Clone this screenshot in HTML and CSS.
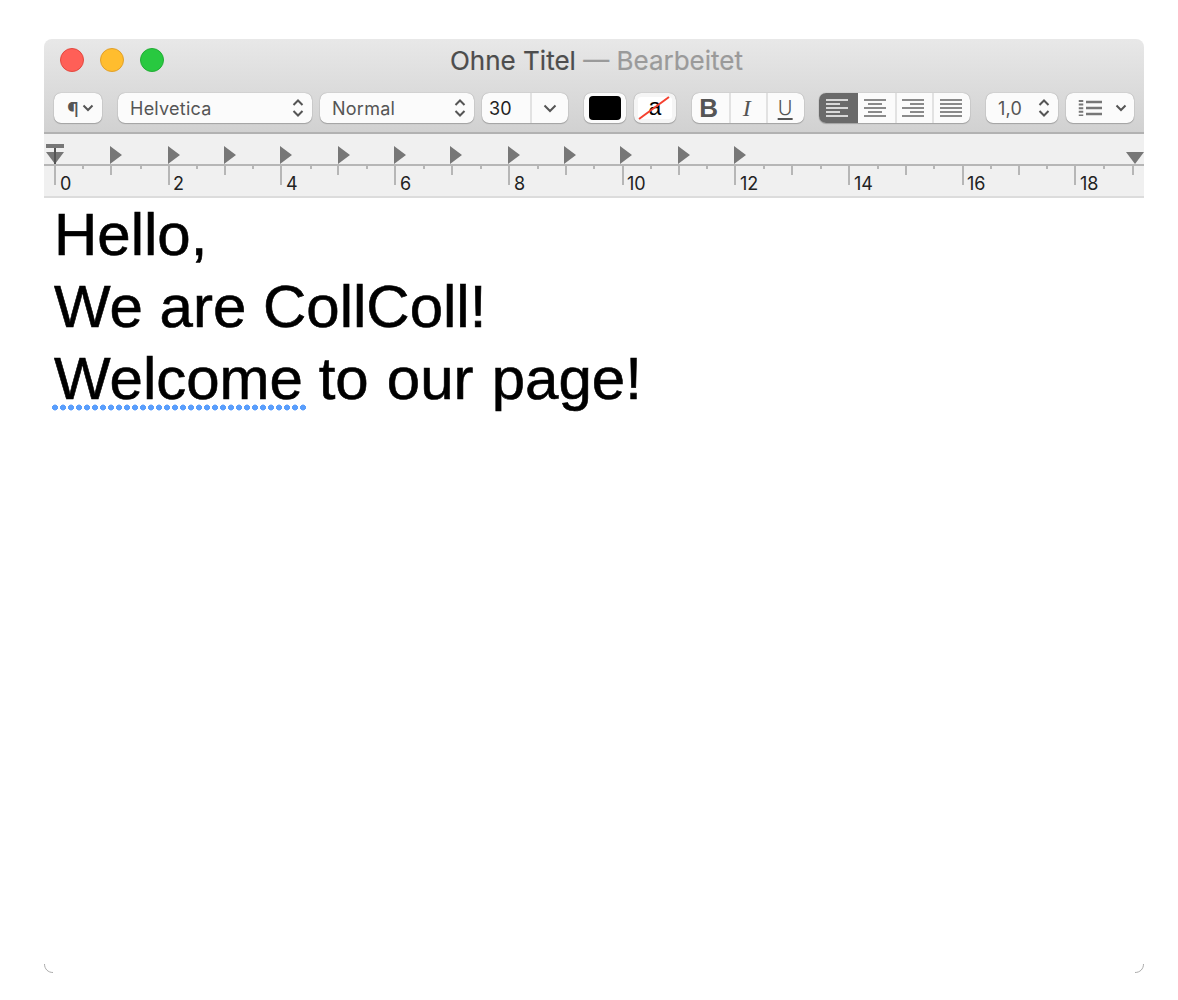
FILE: index.html
```html
<!DOCTYPE html>
<html lang="en">
<head>
  <meta charset="UTF-8">
  <title>Ohne Titel</title>
  <link rel="stylesheet" href="styles.css">
</head>
<body>
  <div class="window">
    <div class="titlebar">
      <div class="title-row">
        <div class="lights">
          <span class="light red"></span>
          <span class="light yellow"></span>
          <span class="light green"></span>
        </div>
        <div class="title">Ohne Titel <span class="edited">— Bearbeitet</span></div>
      </div>
      <div class="toolbar">
        <div class="ctl para"><span class="pilcrow">¶</span>
          <svg class="chev" width="12" height="8" viewBox="0 0 12 8"><path d="M1.5 1.5 6 6l4.5-4.5"/></svg>
        </div>
        <div class="ctl font"><span>Helvetica</span>
          <svg class="updown" width="12" height="20" viewBox="0 0 12 20"><path d="M1.5 7 6 2.5 10.5 7M1.5 13 6 17.5 10.5 13"/></svg>
        </div>
        <div class="ctl style"><span>Normal</span>
          <svg class="updown" width="12" height="20" viewBox="0 0 12 20"><path d="M1.5 7 6 2.5 10.5 7M1.5 13 6 17.5 10.5 13"/></svg>
        </div>
        <div class="ctl size">
          <span class="size-val">30</span>
          <span class="size-btn"><svg class="chev" width="14" height="9" viewBox="0 0 14 9"><path d="M1.5 1.5 7 7l5.5-5.5"/></svg></span>
        </div>
        <div class="ctl well first-well"><span class="swatch black"></span></div>
        <div class="ctl well">
          <span class="swatch nobg">
            <span class="a">a</span>
            <svg class="slash" width="32" height="24" viewBox="0 0 32 24"><path d="M1 23 31 1"/></svg>
          </span>
        </div>
        <div class="ctl seg biu">
          <span class="seg-item b">B</span>
          <span class="seg-item i">I</span>
          <span class="seg-item u">U</span>
        </div>
        <div class="ctl seg align">
          <span class="seg-item on">
            <svg width="24" height="20" viewBox="0 0 24 20"><path d="M1 2h22M1 6h14M1 10h22M1 14h14M1 18h22"/></svg>
          </span>
          <span class="seg-item">
            <svg width="24" height="20" viewBox="0 0 24 20"><path d="M1 2h22M5 6h14M1 10h22M5 14h14M1 18h22"/></svg>
          </span>
          <span class="seg-item">
            <svg width="24" height="20" viewBox="0 0 24 20"><path d="M1 2h22M9 6h14M1 10h22M9 14h14M1 18h22"/></svg>
          </span>
          <span class="seg-item">
            <svg width="24" height="20" viewBox="0 0 24 20"><path d="M1 2h22M1 6h22M1 10h22M1 14h22M1 18h22"/></svg>
          </span>
        </div>
        <div class="ctl spacing"><span>1,0</span>
          <svg class="updown" width="12" height="20" viewBox="0 0 12 20"><path d="M1.5 7 6 2.5 10.5 7M1.5 13 6 17.5 10.5 13"/></svg>
        </div>
        <div class="ctl list">
          <svg class="list-icon" width="24" height="18" viewBox="0 0 24 18"><path class="dots" d="M3 1v16"/><path d="M8 3h16M8 9h16M8 15h16"/></svg>
          <svg class="chev" width="12" height="8" viewBox="0 0 12 8"><path d="M1.5 1.5 6 6l4.5-4.5"/></svg>
        </div>
      </div>
    </div>

    <div class="ruler">
      <svg width="1100" height="62" viewBox="0 0 1100 62">
        <path class="ticks" d="M0 31h1100M11 31v20M125 31v20M237 31v20M351 31v20M465 31v20M579 31v20M691 31v20M805 31v20M919 31v20M1031 31v20M67 31v10M181 31v10M294 31v10M408 31v10M522 31v10M635 31v10M748 31v10M862 31v10M975 31v10M1089 31v10M39 31v4M97 31v4M153 31v4M209 31v4M267 31v4M323 31v4M380 31v4M437 31v4M494 31v4M550 31v4M607 31v4M663 31v4M720 31v4M777 31v4M834 31v4M890 31v4M947 31v4M1003 31v4M1060 31v4"/>
        <path class="marks" d="M66 12l12 9-12 9zM124 12l12 9-12 9zM180 12l12 9-12 9zM236 12l12 9-12 9zM294 12l12 9-12 9zM350 12l12 9-12 9zM406 12l12 9-12 9zM464 12l12 9-12 9zM520 12l12 9-12 9zM576 12l12 9-12 9zM634 12l12 9-12 9zM690 12l12 9-12 9zM2 10h18v4H2zM2 18h18l-9 12zM1082 18h18l-9 12z"/>
        <path class="stem" d="M10 14h2v16h-2z"/>
        <text x="16" y="56">0</text>
        <text x="129" y="56">2</text>
        <text x="242" y="56">4</text>
        <text x="356" y="56">6</text>
        <text x="470" y="56">8</text>
        <text x="583" y="56">10</text>
        <text x="696" y="56">12</text>
        <text x="810" y="56">14</text>
        <text x="923" y="56">16</text>
        <text x="1036" y="56">18</text>
      </svg>
    </div>

    <div class="doc">
      <div>Hello,</div>
      <div>We are CollColl!</div>
      <div class="last-line"><span class="spell">Welcome</span> to our page!</div>
    </div>

    <svg class="corner left" width="9" height="9" viewBox="0 0 9 9"><path d="M.5 0C.5 5 4 8.5 9 8.5"/></svg>
    <svg class="corner right" width="9" height="9" viewBox="0 0 9 9"><path d="M8.5 0C8.5 5 5 8.5 0 8.5"/></svg>
  </div>
</body>
</html>
```

FILE: styles.css
```css
body {
  margin: 0;
  background-color: #fff;
  font-family: "Liberation Sans", Arial, sans-serif;
}

svg {
  display: block;
}

.window {
  position: relative;
  width: 1100px;
  height: 934px;
  margin: 39px 0 0 44px;
  background-color: #fff;
}

.titlebar {
  height: 95px;
  box-sizing: border-box;
  padding: 0 10px;
  background: linear-gradient(#e8e8e8, #d1d1d1);
  border-radius: 8px 8px 0 0;
  border-bottom: 2px solid #b2b2b2;
}

.title-row {
  display: grid;
  grid-template-columns: 1fr auto 1fr;
  align-items: center;
  height: 42px;
}

.lights {
  display: flex;
  gap: 16px;
  padding-left: 6px;
}

.light {
  width: 24px;
  height: 24px;
  box-sizing: border-box;
  border-radius: 50%;
  border: 1px solid;
}

.red { background-color: #ff5f57; border-color: #e3483f; }
.yellow { background-color: #ffbd2e; border-color: #e1a02a; }
.green { background-color: #28c940; border-color: #22ad35; }

.title {
  margin-left: 5px;
  font-family: Inter, sans-serif;
  font-size: 26px;
  color: #4d4d4d;
  white-space: nowrap;
  -webkit-text-stroke: 0.2px;
}

.edited {
  color: #9a9a9a;
}

.toolbar {
  display: flex;
  align-items: center;
  margin-top: 12px;
}

.ctl {
  display: flex;
  align-items: center;
  justify-content: space-between;
  height: 30px;
  box-sizing: border-box;
  background-color: #fbfbfb;
  border-radius: 7px;
  box-shadow: 0 0 1px rgba(0, 0, 0, 0.4), 0 1px 1px rgba(0, 0, 0, 0.2);
  font-family: Inter, sans-serif;
  font-size: 18px;
  letter-spacing: 0.25px;
  color: #555;
}

.ctl svg path {
  fill: none;
  stroke: #555;
  stroke-width: 2;
}

.para { width: 48px; padding: 0 8px 0 13px; margin-right: 16px; }
.pilcrow { padding-top: 3px; font-size: 20px; line-height: 20px; }
.font { width: 194px; padding: 0 8px 0 12px; margin-right: 8px; }
.style { width: 154px; padding: 0 8px 0 12px; margin-right: 8px; }

.size { width: 86px; margin-right: 16px; color: #222; }
.size-val { width: 48px; padding-left: 7px; box-sizing: border-box; }
.size-btn {
  display: flex;
  flex: 1;
  align-self: stretch;
  align-items: center;
  justify-content: center;
  border-left: 2px solid #e2e2e2;
}

.well { width: 42px; padding: 4px; margin-right: 8px; background-color: #f5f5f5; }
.swatch {
  position: relative;
  display: block;
  flex: 1;
  height: 22px;
  border-radius: 3px;
}
.black { background-color: #000; border-radius: 4px; }
.first-well { padding: 3px 5px; background-color: #fbfbfb; }
.first-well .swatch { height: 24px; }
.nobg { background-color: #fff; text-align: center; }
.a {
  font-family: "Liberation Sans", sans-serif;
  font-size: 23px;
  line-height: 20px;
  color: #000;
}
.slash {
  position: absolute;
  left: 0;
  top: -1px;
}
.ctl .slash path { stroke: #f5402f; stroke-width: 2; }

.seg { overflow: hidden; justify-content: flex-start; }
.seg-item {
  display: flex;
  align-items: center;
  justify-content: center;
  align-self: stretch;
  border-left: 2px solid #e2e2e2;
  box-sizing: border-box;
}
.seg-item:first-child { border-left: none; }

.biu { width: 112px; margin-left: 8px; margin-right: 15px; }
.biu .seg-item { width: 38px; }
.biu .seg-item:first-child { width: 37px; padding-right: 3px; }
.b { font-family: "Liberation Sans", sans-serif; font-size: 26px; font-weight: bold; }
.i { font-family: "Liberation Serif", serif; font-size: 24px; font-style: italic; padding-right: 3px; }
.u {
  font-size: 20px;
  font-weight: 300;
  padding-right: 2px;
  text-decoration: underline;
  text-decoration-thickness: 1.5px;
  text-underline-offset: 3px;
}

.align { width: 151px; margin-right: 16px; }
.align .seg-item { width: 37px; }
.align .seg-item:first-child { width: 39px; }
.align svg { margin-right: 3px; }
.align .seg-item:last-child svg { margin-right: 1px; }
.align svg path { stroke: #8a8a8a; }
.align .on { background-color: #6a6a6a; }
.align .on svg path { stroke: #d8d8d8; }
.align .on + .seg-item { border-left: none; }

.spacing { width: 72px; padding: 0 8px 0 12px; margin-right: 8px; }
.list { width: 68px; padding: 0 7px 0 12px; }
.list svg.list-icon path { stroke: #777; stroke-width: 2.5; }
.list svg.list-icon path.dots { stroke-width: 4.5; stroke-dasharray: 2 1.6; }

.ruler {
  height: 64px;
  box-sizing: border-box;
  background-color: #f0f0f0;
  border-bottom: 2px solid #dcdcdc;
}

.ticks {
  fill: none;
  stroke: #b6b6b6;
  stroke-width: 2;
}

.marks {
  fill: #777;
}

.stem {
  fill: #555;
}

.ruler text {
  font-family: Inter, sans-serif;
  font-size: 18px;
  fill: #222;
}

.doc {
  padding: 1px 0 0 10px;
  font-size: 60px;
  line-height: 72px;
  color: #000;
  -webkit-text-stroke: 0.6px;
}

.last-line {
  word-spacing: 1.5px;
}

.spell {
  margin: 0 -7.5px 0 -3px;
  padding: 0 5px 0 3px;
  background-image: radial-gradient(circle at center, #5a9efc 2.8px, transparent 3.2px);
  background-size: 8px 7px;
  background-repeat: repeat-x;
  background-position: left bottom 1px;
}

.corner {
  position: absolute;
  bottom: 0;
}

.corner path {
  fill: none;
  stroke: #aaa;
  stroke-width: 1;
}

.corner.left { left: 0; }
.corner.right { right: 0; }
```
